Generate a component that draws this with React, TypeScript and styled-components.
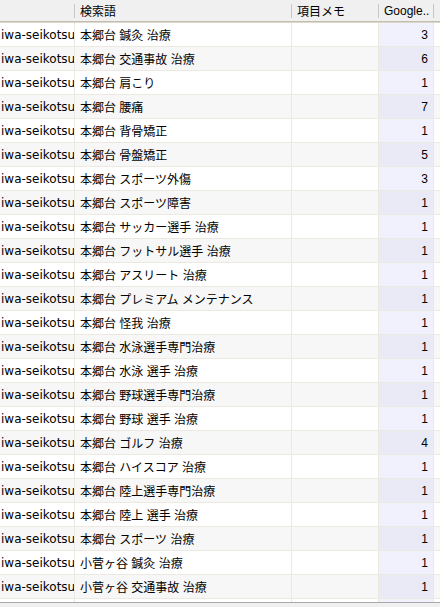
import React from 'react';
import styled, { createGlobalStyle } from 'styled-components';

const rows: [string, number][] = [
  ['本郷台 鍼灸 治療', 3],
  ['本郷台 交通事故 治療', 6],
  ['本郷台 肩こり', 1],
  ['本郷台 腰痛', 7],
  ['本郷台 背骨矯正', 1],
  ['本郷台 骨盤矯正', 5],
  ['本郷台 スポーツ外傷', 3],
  ['本郷台 スポーツ障害', 1],
  ['本郷台 サッカー選手 治療', 1],
  ['本郷台 フットサル選手 治療', 1],
  ['本郷台 アスリート 治療', 1],
  ['本郷台 プレミアム メンテナンス', 1],
  ['本郷台 怪我 治療', 1],
  ['本郷台 水泳選手専門治療', 1],
  ['本郷台 水泳 選手 治療', 1],
  ['本郷台 野球選手専門治療', 1],
  ['本郷台 野球 選手 治療', 1],
  ['本郷台 ゴルフ 治療', 4],
  ['本郷台 ハイスコア 治療', 1],
  ['本郷台 陸上選手専門治療', 1],
  ['本郷台 陸上 選手 治療', 1],
  ['本郷台 スポーツ 治療', 1],
  ['小菅ヶ谷 鍼灸 治療', 1],
  ['小菅ヶ谷 交通事故 治療', 1],
];

const GlobalStyle = createGlobalStyle`
  html, body {
    margin: 0;
    padding: 0;
    background: #ffffff;
  }
  body {
    font-family: "Liberation Sans", "Noto Sans CJK JP", sans-serif;
    font-size: 12px;
    color: #000;
  }
`;

const COLS = '75px 217px 87px 55px 1fr';

const Grid = styled.div`
  width: 440px;
  height: 607px;
  display: flex;
  flex-direction: column;
  overflow: hidden;
`;

const Header = styled.div`
  display: grid;
  grid-template-columns: ${COLS};
  height: 21px;
  background: #f0f0f0;
  border-bottom: 1px solid #c2bfb2;
  box-shadow: 0 1px 0 #dcd9cc;
  margin-bottom: 1px;
`;

const HeadCell = styled.div`
  position: relative;
  display: flex;
  align-items: center;
  padding-left: 5px;
  white-space: nowrap;
  overflow: hidden;
  font-size: 12px;

  &::after {
    content: '';
    position: absolute;
    right: 0;
    top: 4px;
    bottom: 3px;
    width: 1px;
    background: #c7c7c7;
  }
`;

const Blank = styled.div`
  background: #f0f0f0;
`;

const Body = styled.div`
  flex: 1;
  overflow: hidden;
`;

const Row = styled.div<{ $alt: boolean }>`
  display: grid;
  grid-template-columns: ${COLS};
  height: 23px;
  border-bottom: 1px solid #ebe9e0;
  background: ${(p) => (p.$alt ? '#f7f7f7' : '#ffffff')};
`;

const Cell = styled.div<{ $num?: boolean; $tint?: boolean; $alt?: boolean }>`
  display: flex;
  align-items: center;
  justify-content: ${(p) => (p.$num ? 'flex-end' : 'flex-start')};
  padding: ${(p) => (p.$num ? '0 5px 0 0' : '0 0 0 5px')};
  border-right: 1px solid #ebe9e0;
  white-space: nowrap;
  overflow: hidden;
  background: ${(p) => (p.$tint ? (p.$alt ? '#eaeaf6' : '#f1f1fd') : 'transparent')};
`;

// site column is scrolled, so the domain is cut at the right edge
const Site = styled(Cell)`
  padding-left: 1px;
  font-family: "DejaVu Sans", sans-serif;
  font-size: 12px;
`;

const Filler = styled.div``;

const ScrollBar = styled.div`
  height: 4px;
  border-top: 1px solid #a9a9a9;
  background: #f0f0f0;
`;

export default function App() {
  return (
    <>
      <GlobalStyle />
      <Grid>
        <Header>
          <HeadCell />
          <HeadCell>検索語</HeadCell>
          <HeadCell>項目メモ</HeadCell>
          <HeadCell>Google..</HeadCell>
          <Blank />
        </Header>
        <Body>
          {rows.map(([kw, n], i) => (
            <Row key={i} $alt={i % 2 === 1}>
              <Site>iwa-seikotsu</Site>
              <Cell>{kw}</Cell>
              <Cell />
              <Cell $num $tint $alt={i % 2 === 1}>{n}</Cell>
              <Filler />
            </Row>
          ))}
          <Row $alt={false}>
            <Site />
            <Cell />
            <Cell />
            <Cell $tint />
            <Filler />
          </Row>
        </Body>
        <ScrollBar />
      </Grid>
    </>
  );
}
